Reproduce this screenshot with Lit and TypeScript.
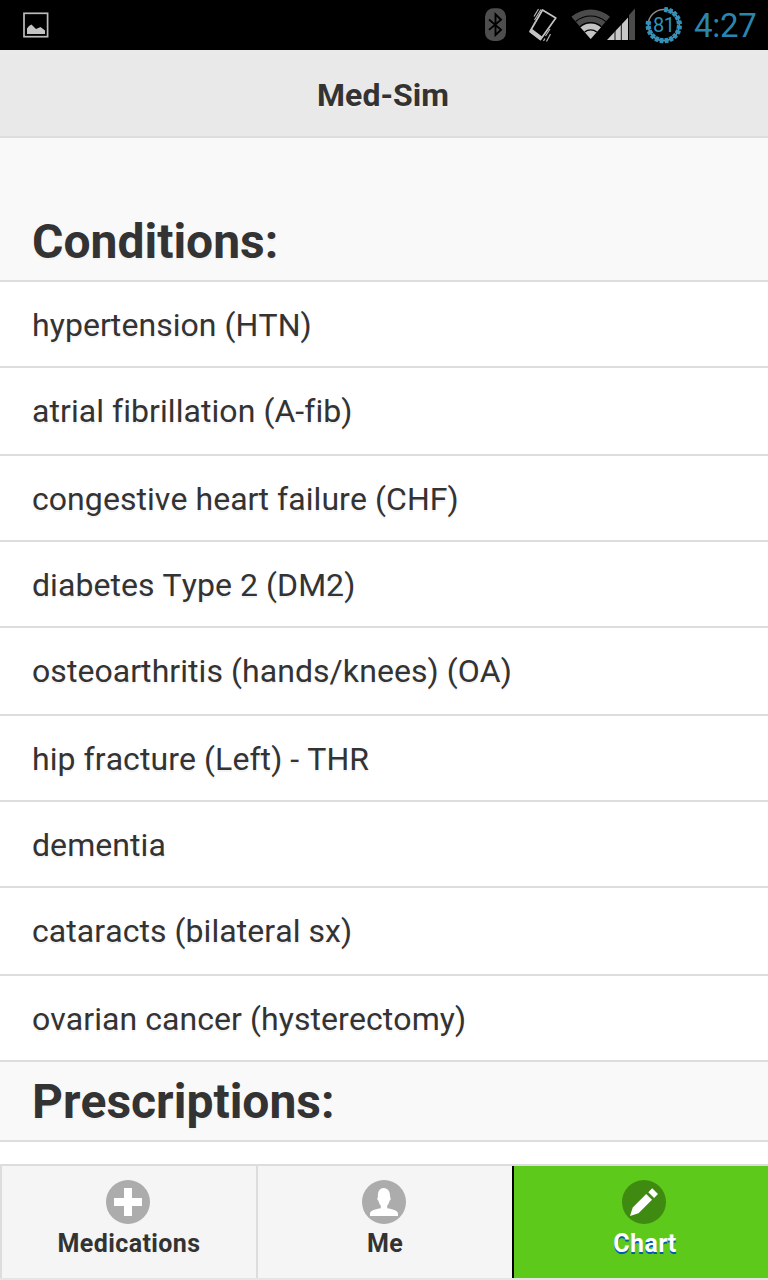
import { LitElement, html, svg, css } from "lit";
import { customElement } from "lit/decorators.js";
import { classMap } from "lit/directives/class-map.js";

const CONDITIONS = [
  "hypertension (HTN)",
  "atrial fibrillation (A-fib)",
  "congestive heart failure (CHF)",
  "diabetes Type 2 (DM2)",
  "osteoarthritis (hands/knees) (OA)",
  "hip fracture (Left) - THR",
  "dementia",
  "cataracts (bilateral sx)",
  "ovarian cancer (hysterectomy)",
];

// Arc of the signal fan, centred on its bottom point.
const fanArc = (r: number) =>
  `M${590.7 - 0.657 * r} ${39 - 0.754 * r}A${r} ${r} 0 0 1 ${590.7 + 0.657 * r} ${39 - 0.754 * r}`;

@customElement("status-bar")
class StatusBar extends LitElement {
  static styles = css`
    :host { display: flex; height: 50px; background: #000; }
    svg { display: block; flex: none; height: 50px; }
    .photo { width: 28px; margin-left: 22px; margin-right: auto; }
    .bt { width: 24px; margin-right: 19px; }
    .vib { width: 32px; margin-right: 11px; }
    .net { width: 68px; margin-right: 6px; }
    .bat { width: 40px; margin-right: 10px; }
    .pct { font: 20px Roboto, sans-serif; letter-spacing: -0.6px; }
    .time { flex: none; width: 74px; font: 33px/52px Roboto, sans-serif; color: #2a86ae; letter-spacing: -0.3px; white-space: nowrap; }
  `;
  render() {
    const teeth = Array.from({ length: 16 }, (_, i) => {
      const a = -82 + i * 18;
      return svg`<rect x="676.8" y="23.2" width="5.2" height="3.8" rx="0.6" transform=${`rotate(${a} 663.8 25.1)`} fill="#2f93bd"/>`;
    });
    return html`
      <svg class="photo" viewBox="22 0 28 50">
        <rect x="24" y="13.3" width="23.6" height="23.4" fill="none" stroke="#bcbcbc" stroke-width="1.7"/>
        <path d="M27 34V28.500L29 26L31.500 24.500L36 29L40.500 27L45 30.500V34Z" fill="#c4c4c4"/>
      </svg>
      <svg class="bt" viewBox="484 0 24 50">
        <rect x="485" y="8.300" width="21" height="32.600" rx="8.500" fill="#4d4d4d"/>
        <path d="M489 19.500L501 29.700L495.500 35V14.300L501 19.700L489 29.900" fill="none" stroke="#000" stroke-width="1.900"/>
      </svg>
      <svg class="vib" viewBox="527 0 32 50">
        <path d="M542.500 10L555.800 18L540.500 39.500L530 31.500Z" fill="none" stroke="#c4c4c4" stroke-width="1.700" stroke-linejoin="round"/>
        <path d="M531.500 28.500L542 36.500L540.300 40.300L529.500 32Z" fill="#c4c4c4"/>
        <path d="M534 16.500L538.500 9M534.500 20L541 9.500M533.500 25L536 21M543.500 41L545 38.500M546.500 41.500L550.500 34M545.500 36L550 29" fill="none" stroke="#b5b5b5" stroke-width="1.200"/>
      </svg>
      <svg class="net" viewBox="570 0 68 50">
        <path d=${fanArc(29.4) + "L590.7 39Z"} fill="#4b4b4b"/>
        <path d=${fanArc(15.6) + "L590.7 39Z"} fill="#c4c4c4"/>
        <path d=${fanArc(23) + fanArc(16.3) + fanArc(9.2)} fill="none" stroke="#000" stroke-width="1.200"/>
        <path d="M607 40L628 17.500V40Z" fill="#c8c8c8"/>
        <path d="M629 40V15L635 8.500V40Z" fill="#4b4b4b"/>
        <path d="M615 20V40M621.300 10V40M628.500 8V40" stroke="#000" stroke-width="0.900"/>
      </svg>
      <svg class="bat" viewBox="644 0 40 50">
        <circle cx="663.800" cy="25.100" r="15.600" fill="none" stroke="#8a8a8a" stroke-width="1.500"/>
        ${teeth}
        <text class="pct" x="663.700" y="31.700" text-anchor="middle" fill="#2f93bd">81</text>
      </svg>
      <div class="time">4:27</div>
    `;
  }
}

@customElement("tab-item")
class TabItem extends LitElement {
  static properties = { label: {}, icon: {}, active: { type: Boolean } };
  declare label: string;
  declare icon: string;
  declare active: boolean;
  static styles = css`
    :host { display: block; }
    .tab { display: flex; flex-direction: column; align-items: center; height: 112px; box-sizing: border-box; padding-top: 14px; padding-right: 2px; border-left: 2px solid #ddd; background: #f5f5f5; color: #333; }
    .active { background: #5dc91a; border-left-color: #000; color: #fff; padding-left: 6px; padding-right: 0; }
    svg { display: block; width: 44px; height: 44px; flex: none; }
    .label { font: bold 25px/30px Roboto, sans-serif; font-kerning: none; letter-spacing: 0.4px; margin-top: 5px; padding-left: 2px; text-shadow: 0 2px 0 #f3f3f3; }
    .active .label { text-shadow: 0 2px 0 #0059b3; }
  `;
  render() {
    const glyphs: Record<string, unknown> = {
      plus: svg`<path d="M18 8h8v10h10v8H26v10h-8V26H8v-8h10Z" fill="#fff"/>`,
      user: svg`<path d="M8 36V33.500C8 30.500 14 28.800 18.800 28.200V25.800C17.300 24 16.600 22 16.500 20.800C15.300 20.500 14.800 18 15.900 17.300C15.600 11.500 17.500 8 21.500 8C26 8 28.300 11.500 28.100 17.300C29.200 18 28.700 20.500 27.500 20.800C27.300 22.500 26.500 24.300 25.200 25.800V28.200C30 28.800 36 30.500 36 33.500V36Z" fill="#fff"/>`,
      pencil: svg`<path d="M8 36L10.700 27.500L24.200 14L30 19.800L16.500 33.300ZM26.300 12.200L30.200 8.200L36 14L32.100 18Z" fill="#fff"/>`,
    };
    return html`<div class=${classMap({ tab: true, active: this.active })}>
      <svg viewBox="0 0 44 44">
        <circle cx="22" cy="22" r="22" fill=${this.active ? "#3f8b12" : "#acacac"}/>
        ${glyphs[this.icon]}
      </svg>
      <div class="label">${this.label}</div>
    </div>`;
  }
}

@customElement("app-root")
class AppRoot extends LitElement {
  static styles = css`
    :host { display: flex; flex-direction: column; height: 1280px; overflow: hidden; background: #fff; color: #333; font-family: Roboto, sans-serif; font-kerning: none; font-variant-ligatures: none; }
    .title { flex: none; height: 86px; font-size: 32px; line-height: 90px; font-weight: bold; text-align: center; padding-right: 2px; background: #e9e9e9; border-bottom: 2px solid #ddd; text-shadow: 0 2px 0 #eee; }
    .list { flex: 1; min-height: 0; overflow: hidden; }
    .heading { box-sizing: border-box; height: 80px; margin: 0; padding: 0 32px; font-size: 48px; line-height: 80px; font-weight: bold; background: #f9f9f9; border-bottom: 2px solid #ddd; text-shadow: 0 2px 0 #f3f3f3; }
    .first { height: 144px; padding-top: 64px; }
    .row { box-sizing: border-box; height: 86px; padding: 0 32px; font-size: 32px; line-height: 86px; letter-spacing: 0.06px; border-bottom: 2px solid #ddd; text-shadow: 0 2px 0 #f3f3f3; white-space: nowrap; }
    .row:nth-child(3n) { height: 88px; }
    .tabs { flex: none; display: grid; grid-template-columns: repeat(3, 256px); border-top: 2px solid #ddd; border-bottom: 2px solid #e5e5e5; }
  `;
  render() {
    return html`
      <status-bar></status-bar>
      <div class="title">Med-Sim</div>
      <div class="list">
        <h1 class="heading first">Conditions:</h1>
        ${CONDITIONS.map((c) => html`<div class="row">${c}</div>`)}
        <h1 class="heading">Prescriptions:</h1>
      </div>
      <div class="tabs">
        <tab-item label="Medications" icon="plus"></tab-item>
        <tab-item label="Me" icon="user"></tab-item>
        <tab-item label="Chart" icon="pencil" active></tab-item>
      </div>
    `;
  }
}
